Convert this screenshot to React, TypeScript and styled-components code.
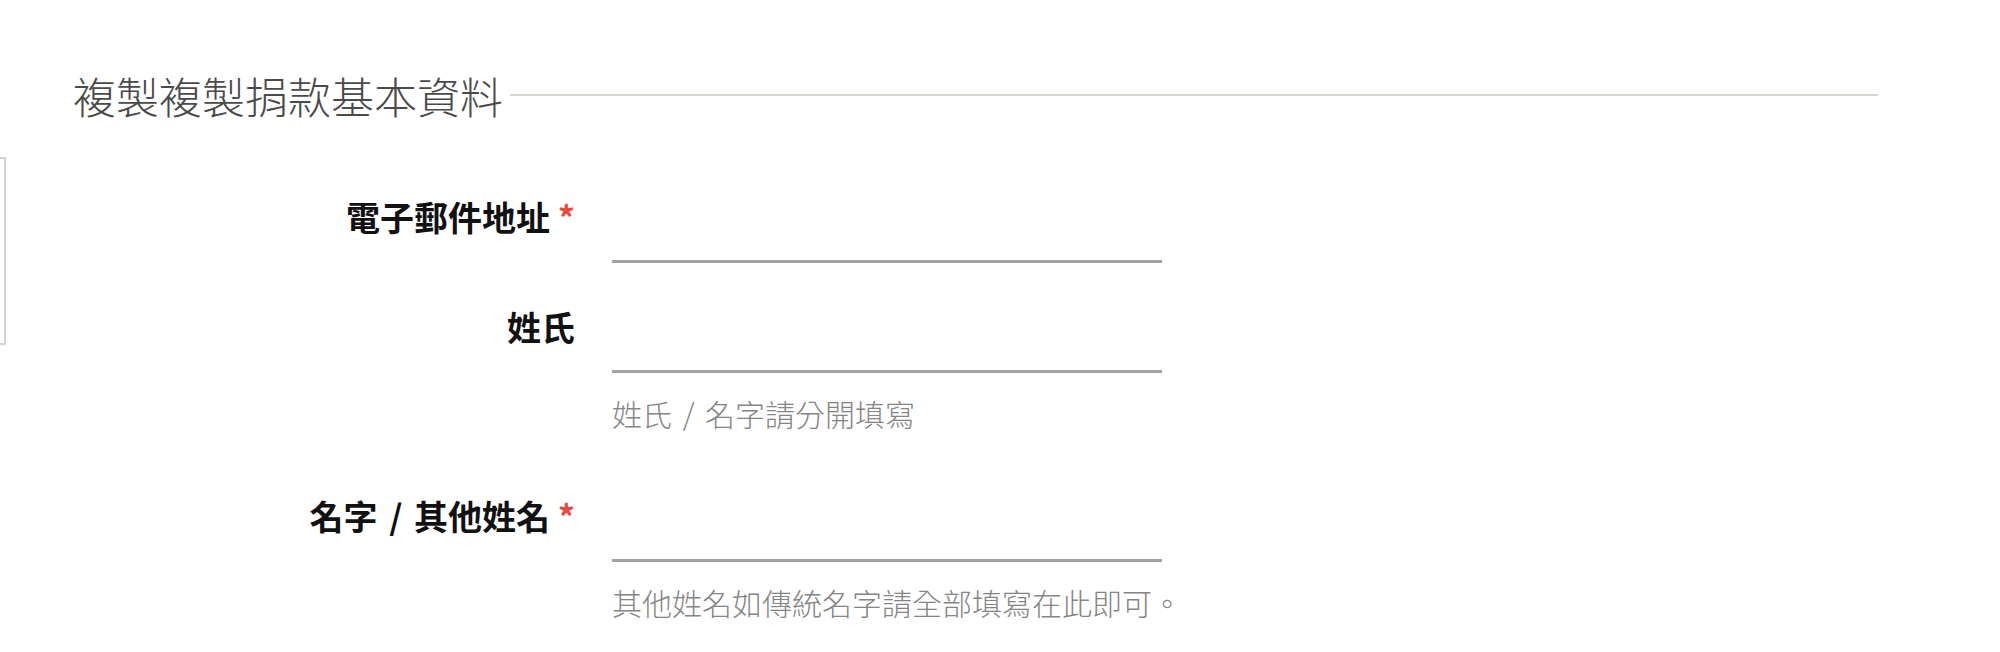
import React from "react";
import styled, { createGlobalStyle } from "styled-components";

const GlobalStyle = createGlobalStyle`
  html, body {
    margin: 0;
    padding: 0;
    background: #ffffff;
  }
  body {
    font-family: "Noto Sans CJK TC", "Noto Sans", sans-serif;
    width: 2000px;
    height: 652px;
    overflow: hidden;
  }
`;

interface FieldConfig {
  id: string;
  label: string;
  required: boolean;
  hint?: string;
}

const FIELDS: FieldConfig[] = [
  { id: "email", label: "電子郵件地址", required: true },
  { id: "lastName", label: "姓氏", required: false, hint: "姓氏 / 名字請分開填寫" },
  {
    id: "firstName",
    label: "名字 / 其他姓名",
    required: true,
    hint: "其他姓名如傳統名字請全部填寫在此即可。",
  },
];

// the original font sets " / " a bit wider than Noto does
const withSlash = (text: string) => {
  const parts = text.split(" / ");
  return parts.map((part, i) => (
    <React.Fragment key={i}>
      {i > 0 && <Slash> / </Slash>}
      {part}
    </React.Fragment>
  ));
};

const App = () => {
  return (
    <>
      <GlobalStyle />
      <Page>
        <EdgePanel />
        <SectionHeader>
          <SectionTitle>複製複製捐款基本資料</SectionTitle>
          <HeaderRule />
        </SectionHeader>
        <Form>
          {FIELDS.map((field) => (
            <FieldBlock key={field.id} $hasHint={!!field.hint}>
              <Row>
                <Label htmlFor={field.id}>
                  {withSlash(field.label)}
                  {field.required && <Required> *</Required>}
                </Label>
                <TextInput id={field.id} type="text" />
              </Row>
              {field.hint && <Hint>{withSlash(field.hint)}</Hint>}
            </FieldBlock>
          ))}
        </Form>
      </Page>
    </>
  );
};

export default App;

const Page = styled.div`
  position: relative;
  box-sizing: border-box;
  width: 2000px;
  height: 652px;
  padding: 70px 122px 0 73px;
`;

const EdgePanel = styled.div`
  position: absolute;
  left: -200px;
  top: 157px;
  width: 202px;
  height: 184px;
  border: 2px solid #d2d2d2;
`;

const SectionHeader = styled.div`
  display: flex;
  align-items: center;
  height: 50px;
`;

const SectionTitle = styled.h2`
  margin: 0;
  font-size: 43px;
  line-height: 50px;
  font-weight: 300;
  color: #4a4a4a;
  white-space: nowrap;
`;

const HeaderRule = styled.div`
  flex: 1;
  height: 2px;
  margin-left: 7px;
  background-color: #d6d6ce;
`;

const Form = styled.div`
  display: flex;
  flex-direction: column;
  padding-top: 75px;
`;

const FieldBlock = styled.div<{ $hasHint: boolean }>`
  display: flex;
  flex-direction: column;
  margin-bottom: ${({ $hasHint }) => ($hasHint ? "61px" : "42px")};
`;

const Row = styled.div`
  display: grid;
  grid-template-columns: 502px 550px;
  column-gap: 37px;
  align-items: start;
`;

const Label = styled.label`
  text-align: right;
  font-size: 34px;
  line-height: 44px;
  font-weight: 700;
  color: #111111;
  white-space: nowrap;
`;

const Slash = styled.span`
  margin: 0 4px;
`;

const Required = styled.span`
  color: #e8493d;
`;

const TextInput = styled.input`
  box-sizing: border-box;
  width: 550px;
  height: 68px;
  padding: 0 4px;
  border: none;
  border-bottom: 3px solid #a2a2a2;
  background: transparent;
  font-family: inherit;
  font-size: 30px;
  outline: none;
`;

const Hint = styled.p`
  margin: 20px 0 0 539px;
  font-size: 30px;
  line-height: 40px;
  font-weight: 300;
  color: #858585;
  white-space: nowrap;
`;
